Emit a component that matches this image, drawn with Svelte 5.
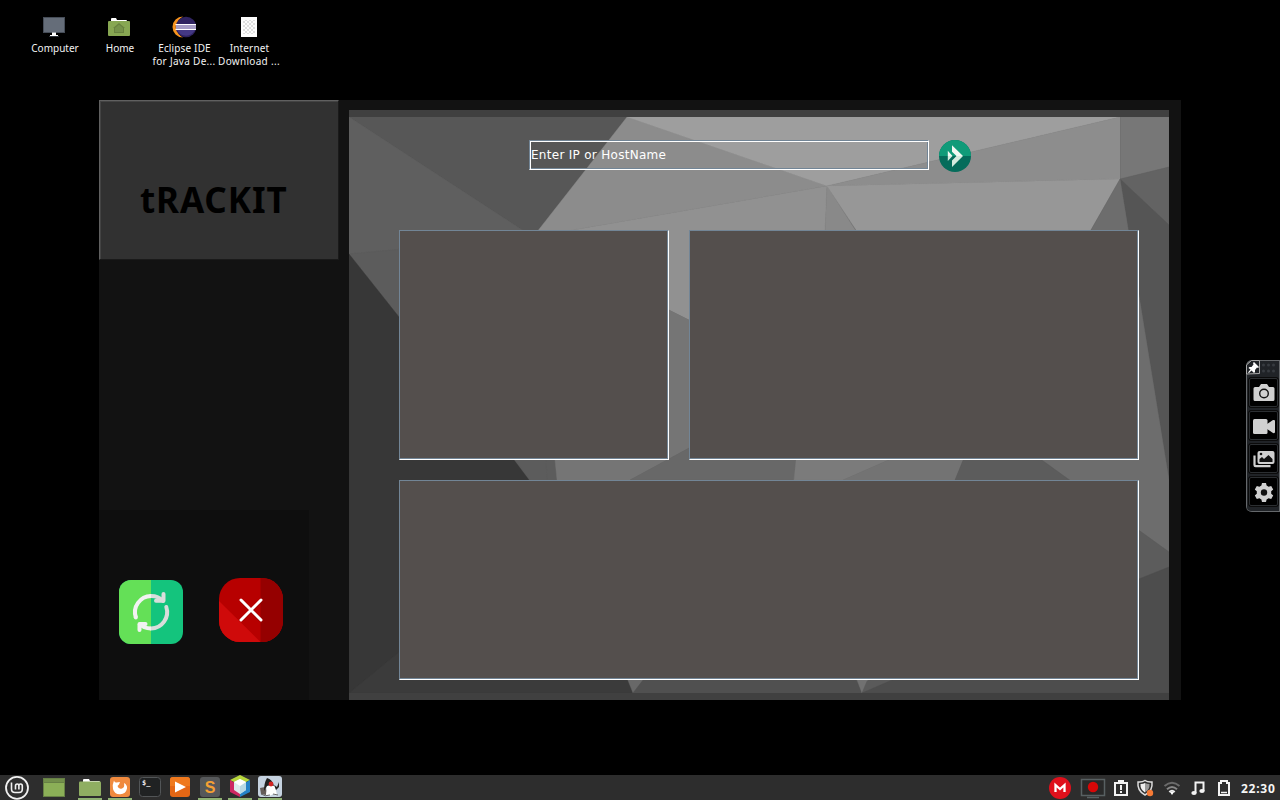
<script>
  const facets = [
    ['349,117 627,117 533,237', '#575757'],
    ['349,117 533,237 349,254', '#5f5f5f'],
    ['349,254 533,237 560,700 530,480 515,460 399,317', '#5c5c5c'],
    ['349,254 399,317 514,460 529,480 630,693 349,693', '#373737'],
    ['349,693 399,652 628,652 633,693', '#3b3b3b'],
    ['627,117 827,186 533,237', '#8c8c8c'],
    ['627,117 1120,117 827,186', '#9e9e9e'],
    ['1120,117 1120,179 827,186', '#8d8d8d'],
    ['533,237 827,186 824,260 689,320 669,310', '#919191'],
    ['827,186 870,253 824,260', '#898989'],
    ['827,186 1120,179 1082,245 866,245', '#979797'],
    ['1120.5,117 1169,117 1169,167 1120.5,179', '#777777'],
    ['1120,179 1169,167 1169,225', '#636363'],
    ['1120,179 1169,225 1169,480', '#555555'],
    ['1120,179 1169,480 1169,552 1042,460 1060,285', '#6d6d6d'],
    ['650,300 669,310 689,320 689,448 630,480 557,480 555,460', '#757575'],
    ['689,448 796,448 794,480 630,480', '#686868'],
    ['797,448 916,448 843,480 794,480', '#7b7b7b'],
    ['916,448 968,448 955,480 843,480', '#737373'],
    ['968,448 1025,448 1169,552 1169,567 1139,579 955,480', '#5c5c5c'],
    ['633,693 600,610 740,560', '#686868'],
    ['633,693 643,680 700,613 820,600 862,693', '#505050'],
    ['862,693 850,660 880,655', '#717171'],
    ['862,693 867,681 950,655', '#5a5a5a'],
    ['862,693 892,680 1139,579 1169,567 1169,693', '#4d4d4d']
  ];
  const dots = [0, 1, 2, 3, 4, 5];
</script>

<div class="desktop">
  <div class="shortcuts">
    <div class="shortcut">
      <svg width="24" height="24" viewBox="0 0 24 24"><path d="M1 2h22v16H1z" fill="#464d58"/><path d="M2 3h20v14H2z" fill="#656d79"/><path d="M10 17.500h4V20h2v1H8v-1h2z" fill="#fff"/><path d="M7 21.500h10" stroke="#2b3038"/></svg>
      <span class="nudge">Computer</span>
    </div>
    <div class="shortcut">
      <svg width="24" height="24" viewBox="0 0 24 24"><path d="M4 6V4q0-1 1-1h4l1 2h9q1 0 1 1v1H4z" fill="#fff"/><rect x="1" y="6" width="22" height="15" rx="1" fill="#87a752"/><path d="M12 8l6 5h-1v5H7v-5H6z" fill="#68823f"/><path d="M12 9.500l4 3.500v4H8v-4z" fill="#76934a"/></svg>
      <span class="nudge">Home</span>
    </div>
    <div class="shortcut wide-label">
      <svg width="24" height="24" viewBox="0 0 24 24"><path d="M11 1.500a10.500 10.500 0 1 0 0 21A12 12 0 0 1 11 1.500z" fill="#f7941e"/><circle cx="14" cy="12" r="10.300" fill="#2f2360"/><path d="M5 15h18a10 10 0 0 1-18 0" fill="#443884"/><path d="M4 10h20v4H4z" fill="#a59bc4"/><path d="M3.500 9.500h21M3.500 14.500h21" stroke="#fff" stroke-width="1.100"/></svg>
      <span>Eclipse IDE</span><span class="long">for Java De...</span>
    </div>
    <div class="shortcut wide-label">
      <svg width="24" height="24" viewBox="0 0 24 24"><defs><pattern id="chk" width="4" height="4" patternUnits="userSpaceOnUse"><path d="M0 0h2v2H0zM2 2h2v2H2z" fill="#dedede"/></pattern></defs><path d="M4 2h16v20H4z" fill="#fcfcfc"/><path d="M6 5h12v14H6z" fill="url(#chk)"/></svg>
      <span>Internet</span><span class="long">Download ...</span>
    </div>
  </div>

  <main class="window">
    <aside>
      <div class="brand"><span>tRACKIT</span></div>
      <div class="actions">
        <svg class="refresh" width="64" height="64" viewBox="0 0 64 64">
          <rect width="64" height="64" rx="12" fill="#14c47d"/><path d="M12 0h20v64H12A12 12 0 0 1 0 52V12A12 12 0 0 1 12 0z" fill="#64e057"/>
          <g fill="none" stroke-width="4" stroke-linecap="round" stroke-linejoin="round">
            <path d="M32 16q7.500 0 12 5M47.300 27A16.400 16.400 0 0 1 32 48.500" stroke="#d9dddb"/>
            <path d="M16.800 37.500A16.400 16.400 0 0 1 32 16M32 48.500q-7.500 0-12-5" stroke="#f2f2f2" stroke-linecap="butt"/>
            <path d="M16.800 37.500v-.5" stroke="#f2f2f2"/>
            <path d="M44.500 14v6.800H37" stroke="#d9dddb"/><path d="M20.500 50v-6h6" stroke="#f2f2f2"/>
          </g>
        </svg>
        <svg class="close" width="64" height="64" viewBox="0 0 64 64">
          <defs><clipPath id="rc"><rect width="64" height="64" rx="21"/></clipPath></defs>
          <g clip-path="url(#rc)"><path d="M0 0h64v64H0z" fill="#b70000"/><path d="M0 23l41.500 41H0z" fill="#cf0a0a"/><path d="M41.500 0H64v64H41.500z" fill="#950000"/></g>
          <path d="M22.500 22.500l19 19M41.500 22.500l-19 19" stroke="#700000" stroke-width="3" opacity=".4" transform="translate(0 1)"/>
          <path d="M22 22l20 20M42 22L22 42" stroke="#fff" stroke-width="3" stroke-linecap="round"/>
        </svg>
      </div>
    </aside>

    <section class="content">
      <svg class="backdrop" width="820" height="590" viewBox="349 110 820 590" aria-hidden="true">
        <path d="M349 110h820v590H349z" fill="#404040"/>
        <path d="M349 117h820v576H349z" fill="#5c5c5c"/>
        {#each facets as [points, fill]}
          <polygon {points} {fill} stroke={fill} stroke-width=".4"/>
        {/each}
        <path d="M349 110h820v7H349zM349 693h820v7H349z" fill="#404040"/>
      </svg>
      <div class="search">
        <div class="field"><span>Enter IP or HostName</span></div>
        <svg width="32" height="32" viewBox="0 0 32 32"><circle cx="16" cy="16" r="16" fill="#056c5b"/><path d="M0 16a16 16 0 0 1 32 0z" fill="#109b79"/><path d="M13 5.200L24 16h-6.500L13 11.800zM8.800 10.800L13.500 16H8.800z" fill="#f1f8f2"/><path d="M13 27l11-11h-6.500L13 20.400zM8.800 21l4.700-5H8.800z" fill="#d5ebdf"/></svg>
      </div>
      <div class="panels">
        <div class="panel"></div><div class="panel"></div><div class="panel wide"></div>
      </div>
    </section>
  </main>

  <div class="recorder">
    <div class="grip">
      <svg width="34" height="16" viewBox="0 0 34 16"><path d="M.5 14V5l5-4.500H13.500v13z" fill="#202327" stroke="#a8a8a8"/><path d="M8 2l5 5-1 1-1-.5-2 2.500v2l-1 1-2.500-2.500L3 13l-1-.5 2.500-3L2.500 8l1-1h2l2-2.500L7 3z" fill="#fff"/>{#each dots as d}<circle cx={17.5 + (d % 3) * 5} cy={5 + Math.floor(d / 3) * 6} r="1.500" fill="#373b40"/>{/each}</svg>
    </div>
    <div class="tool"><svg width="24" height="22" viewBox="0 0 24 22"><path d="M3 5h4l2-3h6l2 3h4a1.500 1.500 0 0 1 1.500 1.500v11A1.500 1.500 0 0 1 21 19H3a1.500 1.500 0 0 1-1.500-1.500v-11A1.500 1.500 0 0 1 3 5z" fill="#d0d0d0"/><circle cx="12" cy="11.500" r="4.300" fill="none" stroke="#111" stroke-width="1.400"/></svg></div>
    <div class="tool"><svg width="24" height="22" viewBox="0 0 24 22"><rect x="1" y="4" width="14.500" height="15" rx="1.500" fill="#d0d0d0"/><path d="M15 9l6-4q2-.5 2 1v11q0 1.500-2 1l-6-4z" fill="#d0d0d0"/></svg></div>
    <div class="tool"><svg width="24" height="22" viewBox="0 0 24 22"><rect x="5.500" y="3" width="17" height="13" rx="2" fill="#d0d0d0"/><path d="M2.500 7.500v9.500q0 1.200 1.200 1.200H18.500" fill="none" stroke="#d0d0d0" stroke-width="2.200"/><path d="M7.500 14v-3l2.500-2 2 2 4.500-4 4 4v3z" fill="#111"/><circle cx="9" cy="6" r="1.300" fill="#111"/></svg></div>
    <div class="tool"><svg width="24" height="22" viewBox="0 0 24 22"><path d="M10 2h4l.6 2.600 2 1.200 2.600-.8 2 3.500-2 1.800v2.400l2 1.800-2 3.500-2.600-.8-2 1.200L14 21h-4l-.6-2.600-2-1.200-2.600.8-2-3.500 2-1.800v-2.400l-2-1.800 2-3.500 2.600.8 2-1.200z" fill="#d0d0d0"/><circle cx="12" cy="11.500" r="3.200" fill="#111"/></svg></div>
  </div>

  <footer class="taskbar">
    <div class="apps">
      <svg class="mint" width="34" height="25" viewBox="0 0 34 25"><circle cx="17" cy="12.800" r="11" fill="#303030" stroke="#f1f1f1" stroke-width="1.800"/><path d="M11.500 7.500V14q0 3.500 3.500 3.500h4q3.300 0 3.300-3.300V11q0-2-1.700-2t-1.700 2v3.500M18.900 11q0-2-1.700-2t-1.700 2v3.500" fill="none" stroke="#f1f1f1" stroke-width="1.600"/></svg>
      <svg class="show" width="24" height="25" viewBox="0 0 24 25"><path d="M1 3h22v19H1z" fill="#668044"/><path d="M2 4h20v3H2z" fill="#728f4b"/><path d="M2 8h20v13H2z" fill="#8baf57"/></svg>
      <div class="app open"><svg width="24" height="22" viewBox="0 0 24 22"><path d="M5 7V5q0-1 1-1h5l1 2h9q1 0 1 1z" fill="#fff"/><rect x="1" y="6.500" width="22" height="14.500" rx="1" fill="#8fae62"/></svg></div>
      <div class="app open"><svg width="24" height="22" viewBox="0 0 24 22"><rect x="2" y="2" width="20" height="20" rx="3" fill="#f08a3e"/><path d="M6 5.500q.5 2.500 2.500 2l3.500-.5-1 2.500-1.500 1.500q1 3.500 4.500 2.500 3-1 2-5.500 3.500 2 3 5.500a7.200 7.200 0 0 1-14 .5Q4 10 6 5.500z" fill="#fff"/></svg></div>
      <div class="app"><svg width="24" height="22" viewBox="0 0 24 22"><rect x="1.500" y="2.500" width="21" height="19" rx="3" fill="#202223" stroke="#525557"/><text x="4" y="10" class="prompt">$_</text></svg></div>
      <div class="app"><svg width="24" height="22" viewBox="0 0 24 22"><rect x="2" y="2" width="20" height="20" rx="3" fill="#e46615"/><path d="M5 2h14q3 0 3 3v6H2V5q0-3 3-3z" fill="#ef791e"/><path d="M7 6.500l11 5.500-11 5.500z" fill="#fff"/></svg></div>
      <div class="app open"><svg width="24" height="22" viewBox="0 0 24 22"><rect x="2" y="2" width="20" height="20" rx="3" fill="#56585a"/><text x="12" y="17.500" text-anchor="middle" class="sublime">S</text></svg></div>
      <div class="app open"><svg width="24" height="22" viewBox="0 0 24 22"><path d="M12 0L22 5 12 10 2 5z" fill="#b7d63b"/><path d="M2 5l10 6v11L2 17z" fill="#ce2762"/><path d="M22 5l-10 6v11l10-5z" fill="#2482c7"/><path d="M12 4l6 3v8l-6 4-6-4V7z" fill="#dbe9eb"/><path d="M12 11l6-4v8l-6 4z" fill="#b8d9e5"/><path d="M12 4l6 3-6 4-6-4z" fill="#fff"/></svg></div>
      <div class="app open"><svg width="24" height="22" viewBox="0 0 24 22"><rect x="0" y="1" width="24" height="21" rx="3" fill="#c5d2e0"/><path d="M2 13l5-1 2 4-1 4-5-1z" fill="#655c58"/><path d="M9 9l3 0 5 2 2 9q-2 1-4-1-3 3-7 1z" fill="#fff"/><path d="M9 3q5 1 7 8l-3-1-4 1-3 5q0-8 3-13z" fill="#202020"/><path d="M16 10l3 2 2-5v5l-3 3z" fill="#222"/><circle cx="13" cy="9" r="2.400" fill="#d32222"/><path d="M3 19q4 3 9 1M15 19l5 1" stroke="#666" stroke-width="1" fill="none"/></svg></div>
    </div>
    <div class="tray">
      <svg class="g8" width="24" height="25" viewBox="1048 775 24 25"><circle cx="1060" cy="788" r="11" fill="#df101c"/><path d="M1055.500 792v-7l4.500 4 4.500-4v7" fill="none" stroke="#fff" stroke-width="2.300"/></svg>
      <svg class="g7" width="26" height="25" viewBox="1080 775 26 25"><path d="M1081.500 779.500h23v16h-23z" fill="#292929" stroke="#586062" stroke-width="1.500"/><circle cx="1093" cy="787" r="5.200" fill="#d80707"/><path d="M1087 797.500h12" stroke="#586062" stroke-width="1.500"/></svg>
      <svg class="g7" width="16" height="25" viewBox="1113 775 16 25"><path d="M1115 783h12v12h-12z" fill="none" stroke="#f3f3f3" stroke-width="2"/><path d="M1118 780h6v3h-6z" fill="#f3f3f3"/><path d="M1121 785v5M1121 791v2" stroke="#f3f3f3" stroke-width="2"/></svg>
      <svg class="g9" width="18" height="25" viewBox="1136 775 18 25"><path d="M1145 780.500q3 2 7 1.500 1 9-7 13-8-4-7-13 4 .5 7-1.500z" fill="none" stroke="#ddd" stroke-width="1.500"/><path d="M1145 783v9.500q-5-3-4.500-8.500 3 0 4.500-1z" fill="#eee"/><path d="M1145 783q2 1 4.500 1 .5 5.500-4.500 8.500z" fill="#999"/><circle cx="1150" cy="793" r="3.200" fill="#f67a35"/></svg>
      <svg class="g9" width="18" height="25" viewBox="1163 775 18 25"><g fill="none" stroke-width="2"><path d="M1164.500 786q7.500-6.500 15 0" stroke="#6b6b6b"/><path d="M1167 789.300q5-4.500 10 0" stroke="#888"/><path d="M1169.300 792q2.700-2.500 5.400 0" stroke="#eee"/></g><path d="M1170 792h4l-2 3z" fill="#fff"/></svg>
      <svg class="g11" width="16" height="25" viewBox="1190 775 16 25"><path d="M1195.500 793v-10.500h8V791" fill="none" stroke="#f3f3f3" stroke-width="2"/><ellipse cx="1194" cy="793" rx="2.700" ry="2" fill="#f3f3f3"/><ellipse cx="1202" cy="791" rx="2.700" ry="2" fill="#f3f3f3"/></svg>
      <svg class="g10" width="14" height="25" viewBox="1217 775 14 25"><path d="M1219 783h2v-2h6v2h2v12h-10z" fill="none" stroke="#f3f3f3" stroke-width="2"/><path d="M1221 792.500h6" stroke="#f3f3f3" stroke-width="1.500"/></svg>
      <time>22:30</time>
    </div>
  </footer>
</div>

<style>
  :global(body) { margin: 0; background: #000; }
  svg { display: block; flex: none; }
  .desktop { position: relative; width: 1280px; height: 800px; overflow: hidden; background: #000; display: flex; flex-direction: column; justify-content: space-between; font-family: "Noto Sans", "Open Sans", sans-serif; }
  .shortcuts { display: flex; padding: 15px 0 0 21px; }
  .shortcut { width: 65px; display: flex; flex-direction: column; align-items: center; color: #f2f2f2; font-size: 10px; line-height: 13px; white-space: nowrap; }
  .shortcut svg { margin-bottom: 3px; }
  .nudge { padding-left: 3px; }
  .wide-label { letter-spacing: .15px; }
  .wide-label span { padding-left: 2px; }
  .wide-label .long { letter-spacing: .3px; padding-left: 1px; }
  .window { position: absolute; left: 99px; top: 100px; width: 1082px; height: 600px; display: grid; grid-template-columns: 240px 820px; column-gap: 10px; background: #121212; }
  aside { display: flex; flex-direction: column; justify-content: space-between; align-items: flex-start; }
  .brand { box-sizing: border-box; width: 240px; height: 160px; border: 1px solid; border-color: #606060 #1a1a1a #1a1a1a #606060; background: #313131; box-shadow: inset 1px 1px #434343; display: flex; align-items: center; padding: 40px 0 0 40px; color: #000; font-weight: 700; font-size: 35px; line-height: 40px; letter-spacing: .9px; }
  .actions { box-sizing: border-box; width: 210px; height: 190px; background: #0e0e0e; display: flex; gap: 36px; padding: 70px 0 0 20px; }
  .close { margin-top: -2px; }
  .content { position: relative; margin-top: 10px; height: 590px; }
  .backdrop { position: absolute; inset: 0; z-index: 0; }
  .search { position: relative; display: flex; gap: 10px; padding: 30px 0 0 180px; }
  .field { box-sizing: border-box; width: 400px; height: 30px; border: 1px solid; border-color: #728596 #fff #fff #728596; box-shadow: inset 1px 1px #fff, inset -1px -1px #728596; padding-left: 1px; color: #fff; font: 12px/29px "DejaVu Sans", sans-serif; letter-spacing: .29px; }
  .panels { position: relative; display: grid; grid-template-columns: 270px 450px; grid-template-rows: 230px 200px; gap: 20px; padding: 58px 0 0 50px; }
  .panel { box-sizing: border-box; background: #544f4d; border: 1px solid; border-color: #728596 #fff #fff #728596; box-shadow: inset -1px -1px #728596; }
  .wide { grid-column: 1 / 3; }
  .recorder { position: absolute; left: 1246px; top: 360px; width: 34px; height: 152px; box-sizing: border-box; background: #202327; border-radius: 6px 0 0 6px; box-shadow: inset 1px 1px #65686b, inset -1px -1px #65686b; display: flex; flex-direction: column; align-items: center; gap: 2px; }
  .grip { height: 15px; }
  .tool { box-sizing: border-box; width: 31px; height: 31px; margin-left: 1px; border: 1px solid #0b0b0b; outline: 1px solid #2b2e31; outline-offset: -2px; border-radius: 3px; background: #000; display: flex; align-items: center; justify-content: center; }
  .taskbar { height: 25px; background: #2d2d2d; display: flex; justify-content: space-between; }
  .apps { display: flex; }
  .show { margin: 0 12px 0 8px; }
  .app { box-sizing: border-box; width: 24px; height: 25px; margin-right: 6px; }
  .open { border-bottom: 2px solid #8fb273; }
  .prompt { font: 700 7px "DejaVu Sans Mono", monospace; fill: #eee; }
  .sublime { font: 700 16px "Liberation Sans", sans-serif; fill: #f5a033; }
  .tray { display: flex; align-items: center; width: 232px; }
  .g7 { margin-right: 7px; }
  .g8 { margin-right: 8px; }
  .g9 { margin-right: 9px; }
  .g10 { margin-right: 10px; }
  .g11 { margin-right: 11px; }
  time { color: #f5f5f5; font-size: 12px; font-weight: 700; line-height: 27px; letter-spacing: .75px; padding-top: 2px; }
</style>
